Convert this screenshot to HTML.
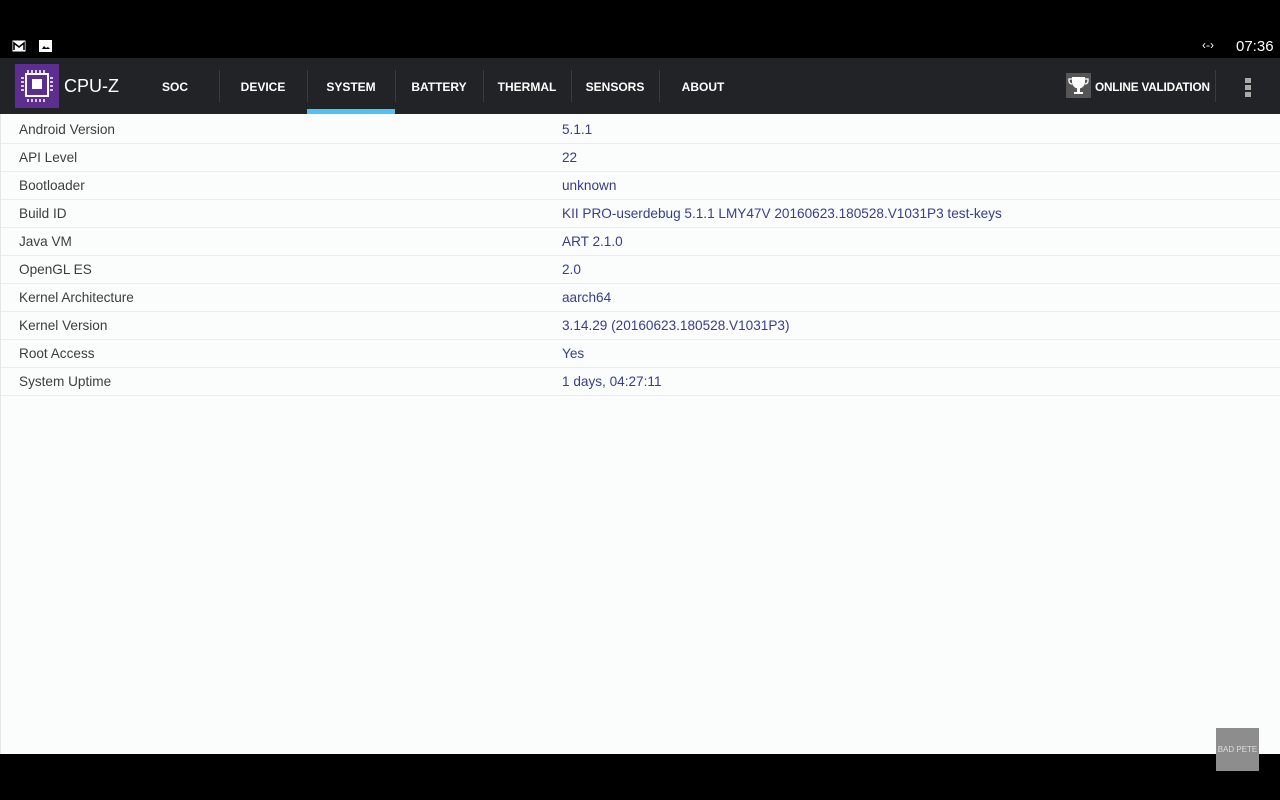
<!DOCTYPE html>
<html><head><meta charset="utf-8"><style>
*{margin:0;padding:0;box-sizing:border-box}
html,body{width:1280px;height:800px;overflow:hidden}
body{background:#000;position:relative;font-family:"Liberation Sans",Arial,sans-serif}
.sb{position:absolute;top:0;left:0;width:1280px;height:58px;background:#000}
.tb{position:absolute;top:58px;left:0;width:1280px;height:56px;background:#222326}
.content{position:absolute;top:114px;left:0;width:1280px;height:640px;background:#fbfdfd;border-left:1px solid #e4e6e6}
.tab{position:absolute;top:0;height:56px;line-height:58px;color:#fff;font-weight:bold;font-size:12px;text-align:center;width:88px}
.sep{position:absolute;top:12px;width:1px;height:32px;background:#3a3b3e}
.row{position:absolute;left:0;width:1280px;height:28px;border-bottom:1px solid #e9eded;font-size:13.6px}
.row .k{position:absolute;left:18px;top:6px;color:#3d3d3d}
.row .v{position:absolute;left:561px;top:6px;color:#3a3b8c}
</style></head><body>
<div class="sb">
<svg style="position:absolute;left:12px;top:40px" width="14" height="12"><rect x="0.5" y="0.5" width="13" height="11" fill="#fff"/><path d="M2 10V3l5 4 5-4v7" stroke="#000" stroke-width="1.6" fill="none"/></svg>
<svg style="position:absolute;left:39px;top:40px" width="13" height="12"><rect width="13" height="12" fill="#fff"/><path d="M3 9l2-3 2 2 2-1 2 2z" fill="#000"/></svg>
<div style="position:absolute;left:1202px;top:38px;color:#fff;font-size:12px">‹-›</div>
<div style="position:absolute;left:1236px;top:38px;color:#fff;font-size:15px">07:36</div>
</div>
<div class="tb">
<div style="position:absolute;left:15px;top:6px;width:44px;height:44px;background:#5d2e8f"></div>
<svg style="position:absolute;left:15px;top:6px" width="44" height="44"><rect x="11" y="10" width="22" height="22" fill="none" stroke="#fff" stroke-width="2"/><rect x="17" y="15" width="10" height="10" fill="#fff"/><g stroke="#fff" stroke-width="1.5"><path d="M13 6v3M17 6v3M21 6v3M25 6v3M29 6v3M13 35v3M17 35v3M21 35v3M25 35v3M29 35v3M6 14h3M6 18h3M6 22h3M6 26h3M35 14h3M35 18h3M35 22h3M35 26h3"/></g></svg>
<div style="position:absolute;left:64px;top:18px;color:#fff;font-size:18px">CPU-Z</div>
<div class="tab" style="left:131px">SOC</div><div class="sep" style="left:219px"></div>
<div class="tab" style="left:219px">DEVICE</div><div class="sep" style="left:307px"></div>
<div class="tab" style="left:307px">SYSTEM</div><div style="position:absolute;left:307px;top:51px;width:88px;height:5px;background:#4fc3f0"></div>
<div class="sep" style="left:395px"></div>
<div class="tab" style="left:395px">BATTERY</div><div class="sep" style="left:483px"></div>
<div class="tab" style="left:483px">THERMAL</div><div class="sep" style="left:571px"></div>
<div class="tab" style="left:571px">SENSORS</div><div class="sep" style="left:659px"></div>
<div class="tab" style="left:659px">ABOUT</div>
<div style="position:absolute;left:1066px;top:15px;width:25px;height:25px;background:#555"></div>
<svg style="position:absolute;left:1066px;top:15px" width="25" height="25"><path d="M6 4h13v5a6.5 6.5 0 0 1-13 0z M11 15h3v4h3v2H8v-2h3z" fill="#fff"/><path d="M6 6H3v2a3 3 0 0 0 3 3M19 6h3v2a3 3 0 0 1-3 3" stroke="#fff" stroke-width="1.3" fill="none"/></svg>
<div style="position:absolute;left:1095px;top:22px;color:#fff;font-weight:bold;font-size:11.8px;white-space:nowrap;letter-spacing:-0.2px">ONLINE VALIDATION</div>
<div class="sep" style="left:1215px"></div>
<div style="position:absolute;left:1245px;top:20px;width:6px;height:5px;background:#aaa"></div>
<div style="position:absolute;left:1245px;top:27px;width:6px;height:5px;background:#aaa"></div>
<div style="position:absolute;left:1245px;top:34px;width:6px;height:5px;background:#aaa"></div>
</div>
<div class="content">
<div class="row" style="top:2px"><span class="k">Android Version</span><span class="v">5.1.1</span></div>
<div class="row" style="top:30px"><span class="k">API Level</span><span class="v">22</span></div>
<div class="row" style="top:58px"><span class="k">Bootloader</span><span class="v">unknown</span></div>
<div class="row" style="top:86px"><span class="k">Build ID</span><span class="v">KII PRO-userdebug 5.1.1 LMY47V 20160623.180528.V1031P3 test-keys</span></div>
<div class="row" style="top:114px"><span class="k">Java VM</span><span class="v">ART 2.1.0</span></div>
<div class="row" style="top:142px"><span class="k">OpenGL ES</span><span class="v">2.0</span></div>
<div class="row" style="top:170px"><span class="k">Kernel Architecture</span><span class="v">aarch64</span></div>
<div class="row" style="top:198px"><span class="k">Kernel Version</span><span class="v">3.14.29 (20160623.180528.V1031P3)</span></div>
<div class="row" style="top:226px"><span class="k">Root Access</span><span class="v">Yes</span></div>
<div class="row" style="top:254px"><span class="k">System Uptime</span><span class="v">1 days, 04:27:11</span></div>
</div>
<div style="position:absolute;left:1216px;top:728px;width:43px;height:43px;background:#8d8d8d;color:#ddd;font-size:8px;text-align:center;line-height:43px;white-space:nowrap;overflow:hidden">BAD PETE</div>
</body></html>
